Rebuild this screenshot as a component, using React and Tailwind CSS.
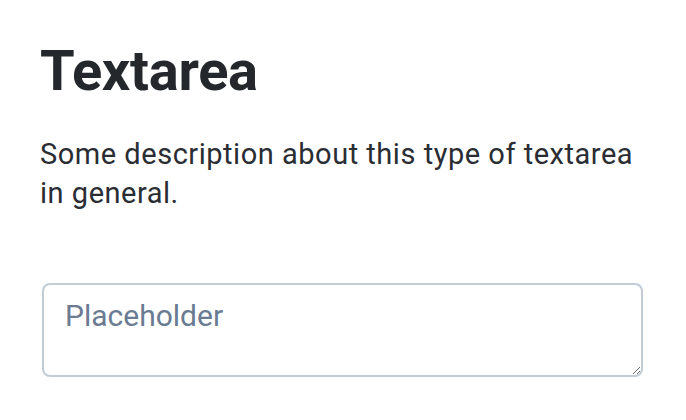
export default function App() {
  return (
    <div className="min-h-[420px] bg-white px-[40px] pt-[38px] text-[#24272c]" style={{ fontFamily: 'Roboto, sans-serif' }}>
      <h1 className="text-[56px] leading-[67px] font-bold tracking-[-0.005em]">
        Textarea
      </h1>
      <p className="mt-[30px] w-[606px] text-[29px] leading-[39px] tracking-[0.018em] text-[#2a2d33]">
        Some description about this type of textarea in general.
      </p>
      <textarea
        placeholder="Placeholder"
        className="mt-[70px] ml-[2px] block h-[94px] w-[601px] rounded-[8px] border-2 border-[#c2ccd7] px-[21px] pt-[13px] text-[30px] leading-[36px] placeholder:text-[#6a7b92] outline-none"
      />
    </div>
  );
}
